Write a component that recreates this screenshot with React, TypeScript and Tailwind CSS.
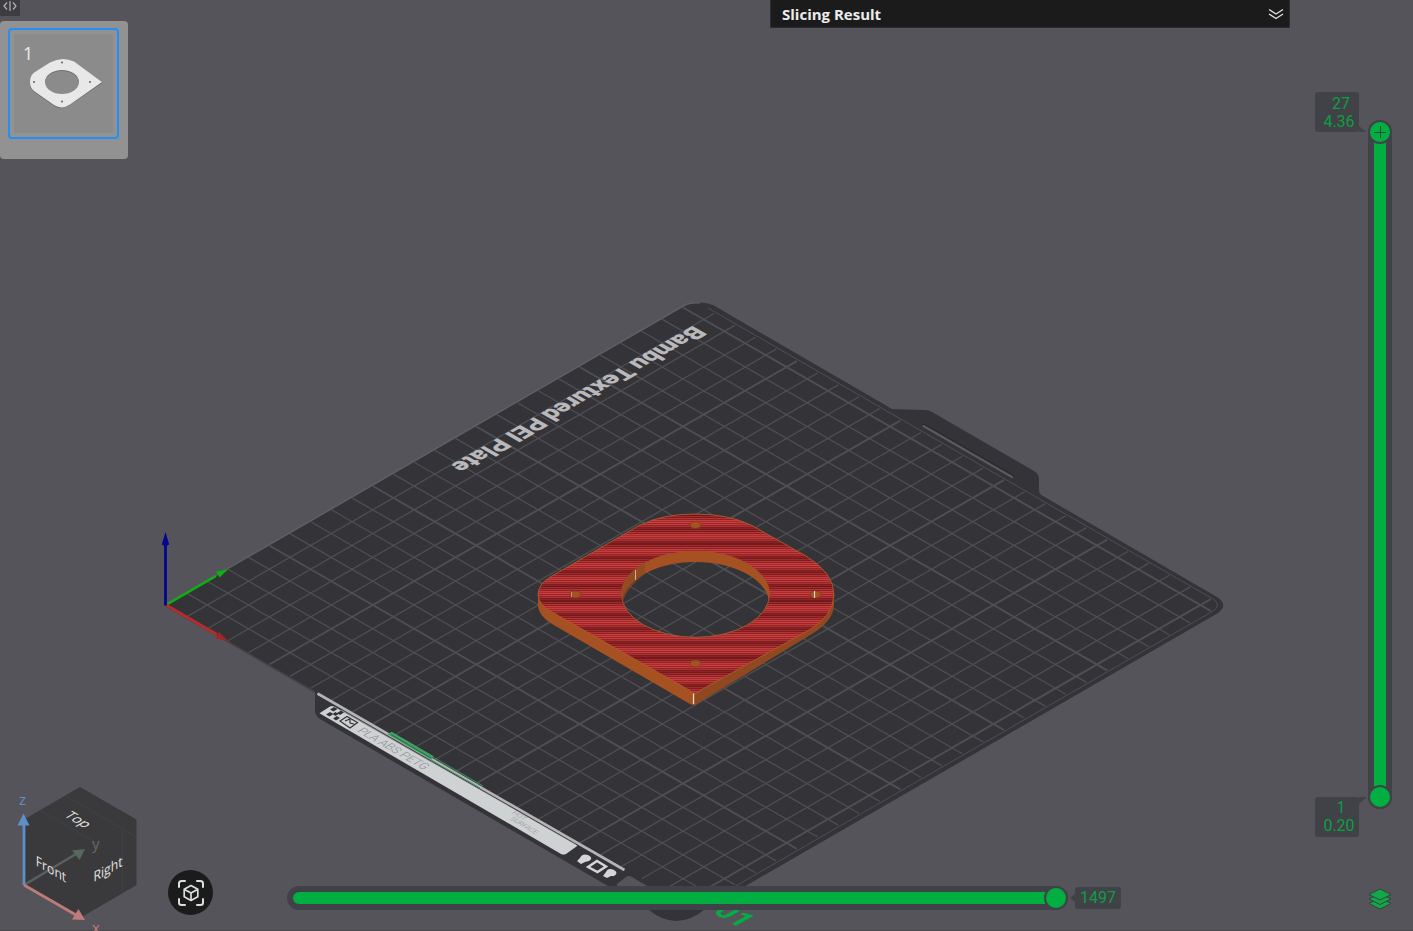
import { useState } from "react";

const CELL_X = 20.69;
const CELL_Y = 11.9;
const ORIGIN = { x: 165.8, y: 605 };
const GRID_END = 25.5;
const GRID_LINES = Array.from({ length: 25 }, (_, i) => i + 1);

const MAX_LAYER = 27;
const MAX_STEP = 1497;

// bed coordinates (1 unit = 10mm) -> scene coordinates
const project = (bx: number, by: number) => ({
  x: ORIGIN.x + CELL_X * (bx + by),
  y: ORIGIN.y + CELL_Y * (bx - by),
});

const layerZ = (layer: number) => (0.2 + (layer - 1) * 0.16).toFixed(2);

// one band of infill, darkest row first
const STRIPES = [
  "#6f1a1c", "#a02a2c", "#7c1e20", "#b43234", "#8c2426", "#c43c3c", "#a82c2e",
  "#c83e3e", "#9a282a", "#c23a3a", "#922628", "#ae2f31", "#7c1e20", "#8c2224",
];
const BAND = 14.25;
const INFILL_TOP = 513;
const INFILL_ROWS = Array.from({ length: 186 }, (_, i) => {
  const y = INFILL_TOP + i;
  const phase = (((y - 529) % BAND) + BAND) % BAND;
  return { y, fill: STRIPES[Math.floor(phase) % STRIPES.length] };
});

const TOP_FACE =
  "M538 595 Q538 584 551 576.5 L640 525 Q663 514 695 514 Q728 514 751 525 L806 556 Q834 573 834 595 Q833 616 810 629.5 L701 690 Q695 697 689 690 L551 611.5 Q539 605 538 595 Z M621.5 594.3 A74 43 0 1 0 769.5 594.3 A74 43 0 1 0 621.5 594.3 Z";

const HOLES = [
  { x: 695.5, y: 525 },
  { x: 575.5, y: 594.5 },
  { x: 815.5, y: 594.5 },
  { x: 695.5, y: 663.5 },
];

const THUMB =
  "appearance-none bg-transparent pointer-events-none outline-none [&::-webkit-slider-thumb]:pointer-events-auto [&::-webkit-slider-thumb]:size-6 [&::-webkit-slider-thumb]:cursor-pointer [&::-webkit-slider-thumb]:appearance-none [&::-webkit-slider-thumb]:rounded-full [&::-webkit-slider-thumb]:border-2 [&::-webkit-slider-thumb]:border-[#414247] [&::-webkit-slider-thumb]:bg-[#00ae42]";

function BedGrid() {
  return (
    <g stroke="#4e4e53">
      {GRID_LINES.map((n) => {
        const a = project(n, 0);
        const b = project(n, GRID_END);
        const c = project(0, n);
        const d = project(GRID_END, n);
        return (
          <g key={n} strokeWidth={n % 5 === 0 ? 2 : 1.3}>
            <line x1={a.x} y1={a.y} x2={b.x} y2={b.y} />
            <line x1={c.x} y1={c.y} x2={d.x} y2={d.y} />
          </g>
        );
      })}
    </g>
  );
}

function Bed() {
  return (
    <g>
      {/* plate body */}
      <path
        d="M166 605 L683 307 Q697 299 713 305 L892 409 L925 410 Q929 410 932 412 L1034 471 Q1039 474 1039 479 V490 Q1039 494 1043 496 L1217 597 Q1229 605 1218 613 L704 910 Q676 932 649 910 L608 886 L320 719 Q315 716 315 710 V692 Z"
        fill="#343338"
      />
      <path d="M166 604 L683 306 Q690 302 700 303" fill="none" stroke="#5e5d62" strokeWidth="1.5" />
      <BedGrid />
      <path d="M708 308 L1213 599 Q1222 605 1213 611 L708 902" fill="none" stroke="#4e4e53" />
      <path d="M166 606 L315 692" stroke="#434247" strokeWidth="1.5" />
      <path d="M923.5 425 L1012.5 476" stroke="#29282c" strokeWidth="3" strokeLinecap="round" />
      <path d="M923.5 426 L1012 477" stroke="#5a595e" strokeWidth="2.4" strokeLinecap="round" />
      <path d="M617 884 L626 877 Q629 875 632 877 L647 886 H617 Z" fill="#55545a" />

      <g transform="matrix(-2.069 1.19 -2.069 -1.19 165.8 605)">
        <text x="-245" y="-10" className="font-['Roboto'] text-[10px] font-black" fill="#b9b9bb">
          Bambu Textured PEI Plate
        </text>
      </g>

      {/* front lip */}
      <path d="M317.5 693.5 L624.5 870" stroke="#b5b5b6" strokeWidth="2.6" />
      <path d="M341 710 L576 845" stroke="#8c8c8f" />
      <path
        d="M319.5 713.3 L330 706.5 Q332 705.5 334 706.5 L577.5 845.7 L566 854 Q563.5 855 561 854 Z"
        fill="#cfd2d3"
      />
      <g fill="#343338">
        <path d="M330 709.5 l4 -2.500 l3.500 2 l-4 2.500z M337 713 l4 -2.500 l3 2 l-4 2.500z M326 714.500 l4 -2.500 l3.500 2 l-4 2.500z M333 718.500 l4 -2.500 l3 2 l-4 2.500z M332.500 714 l3 -2 l3 2 l-3 2z" />
      </g>
      <g fill="none" stroke="#343338" strokeWidth="1.2">
        <path d="M340 721 L347 716.5 L357.5 722.5 L350 728 Z" />
        <path d="M345 721 L350 719 V723 L354 724" />
      </g>
      <g transform="matrix(2.069 1.19 2.069 -1.19 165.8 605) scale(1 -1)" fill="#909295">
        <text x="99" y="7" className="font-['Roboto'] text-[5px] font-light">
          PLA ABS PETG
        </text>
        <text x="171" y="4" className="font-['Roboto'] text-[3px] font-light">
          HOT
        </text>
        <text x="173" y="7" className="font-['Roboto'] text-[3px] font-light">
          SURFACE
        </text>
      </g>
      <path d="M387.3 734.3 L391.7 731.7 L433.3 756 L431.7 760 Z" fill="#41a267" />
      <path d="M391 734.5 L431 758" stroke="#27593a" strokeWidth="0.8" />
      <path d="M433 757 L483 786 M432 760.5 L480 788" stroke="#3b9460" />
      <g fill="#d4d6d7">
        <path d="M577 861 L580 858 Q582 853 588 855 Q594 858 589 861 L585 862 L581 864 Z" />
        <path d="M603 876 L606 872 Q608 867 614 870 Q619 873 614 876 L611 876 L607 878 Z" />
      </g>
      <path d="M588 867 L597 861 L606 866.5 L597.5 872 Z" fill="none" stroke="#d4d6d7" strokeWidth="2.4" />

      <g transform="matrix(2.069 1.19 2.069 -1.19 165.8 605) scale(1 -1)">
        <text x="261" y="-3" className="font-['Roboto'] text-[12px] font-bold" fill="#00ae42">
          01
        </text>
      </g>
    </g>
  );
}

function OriginAxes() {
  return (
    <g>
      <path d="M166 605 L216 576" stroke="#0bb012" strokeWidth="2.6" />
      <path d="M228 569.5 L216 571.5 L219.5 577.5 Z" fill="#0bb012" />
      <path d="M166 605 L217 634.5" stroke="#bb2a2b" strokeWidth="2.6" />
      <path d="M228 641 L215.5 638.5 L219 632 Z" fill="#a52526" />
      <path d="M165.5 605.5 V544" stroke="#050590" strokeWidth="2.8" />
      <path d="M165.5 532 L169.2 544.5 Q165.5 547 161.8 544.5 Z" fill="#050590" />
    </g>
  );
}

function Model() {
  return (
    <g>
      <defs>
        <clipPath id="top-face">
          <path d={TOP_FACE} clipRule="evenodd" />
        </clipPath>
        <clipPath id="bore">
          <ellipse cx="695.5" cy="594.3" rx="74" ry="43" />
        </clipPath>
      </defs>
      {/* side walls */}
      <path d="M538 595 V606 Q539 616 552 624 L690 704 Q695 706 695 705 V690 L621 633 L600 600 Z" fill="#a55122" />
      <path d="M834 595 V606 Q833 621 812 634 L695 705 V690 L790 600 Z" fill="#8f4820" />
      {/* top surface */}
      <g clipPath="url(#top-face)" shapeRendering="crispEdges">
        {INFILL_ROWS.map((row) => (
          <rect key={row.y} x="536" y={row.y} width="300" height="1" fill={row.fill} />
        ))}
      </g>
      <path d={TOP_FACE} fill="none" stroke="#b05a2c" strokeWidth="0.9" />
      <g clipPath="url(#bore)">
        <path
          fillRule="evenodd"
          d="M600 540 H790 V650 H600 Z M621.5 605 A74 43 0 1 0 769.5 605 A74 43 0 1 0 621.5 605 Z"
          fill="#a55122"
        />
        <path d="M621 594 V606 L622 604 Q626 588 645 574 V560 H621 Z" fill="#8f4820" opacity="0.7" />
      </g>
      <path d="M635.5 570 V580" stroke="#c9b4ac" />
      <path d="M693.5 693.5 V704" stroke="#e6d9d2" strokeWidth="1.2" />
      {HOLES.map((h) => (
        <ellipse
          key={`${h.x}-${h.y}`}
          cx={h.x}
          cy={h.y}
          rx="5.5"
          ry="3.5"
          fill="#a55122"
          stroke="#7d3a1c"
          strokeWidth="0.8"
        />
      ))}
      <path d="M814.5 591 V598" stroke="#d8d8d8" strokeWidth="1.2" />
      <path d="M571.5 592 V597" stroke="#c9b4ac" strokeWidth="0.7" />
    </g>
  );
}

function Scene() {
  return (
    <svg
      className="absolute inset-0 h-full w-full"
      viewBox="0 0 1413 931"
      preserveAspectRatio="xMidYMid slice"
      aria-hidden="true"
    >
      <Bed />
      <OriginAxes />
      <Model />
    </svg>
  );
}

function PlateThumbnail() {
  return (
    <div className="w-32 rounded bg-[#929293] px-2 pt-[7px] pb-5">
      <button className="relative block size-[111px] rounded border-2 border-[#2490f5] p-1">
        <span className="absolute top-[11px] left-[13px] font-['Open_Sans'] text-lg leading-6 font-medium text-[#ececec]">
          1
        </span>
        <svg viewBox="14 34 99 99" className="block h-full w-full bg-[#8b8b8c]" aria-hidden="true">
          <path
            fillRule="evenodd"
            d="M30 83 Q30 76 35 73 L50 63 Q62 57 74 62 L101 81 Q103 82.5 101 84 L70 105 Q62 111 54 106 L34 92 Q30 89 30 83 Z M45 83 A17 12 0 1 0 79 83 A17 12 0 1 0 45 83 Z"
            fill="#6f6f70"
          />
          <path
            fillRule="evenodd"
            d="M30 82 Q30 75 35 72 L50 62.5 Q62 56 74 61.5 L102 82 L70 104.5 Q62 110 54 105 L34 91 Q30 88 30 82 Z M45 82 A17 12 0 1 0 79 82 A17 12 0 1 0 45 82 Z"
            fill="#e8e8e8"
          />
          <g fill="#555">
            <circle cx="62" cy="62.5" r="0.9" />
            <circle cx="34" cy="82" r="0.9" />
            <circle cx="90" cy="82" r="0.9" />
            <circle cx="62" cy="101.5" r="0.9" />
          </g>
        </svg>
      </button>
    </div>
  );
}

function ViewCube() {
  return (
    <svg viewBox="0 785 160 146" className="h-[146px] w-40 shrink-0 font-['Open_Sans']">
      <path d="M80 787 L136.5 819.5 V885 L80 918 L24 885 V819.5 Z" fill="#3a3a3c" />
      <path d="M122.5 828 V892 M68 797 L136 837 M40 810 L96 843" stroke="#424244" strokeWidth="0.8" fill="none" />
      <path d="M24 885 L76 854" stroke="#5b605f" strokeWidth="2.6" />
      <path d="M85 849 L72 850.5 L79.5 860 Z" fill="#57685f" />
      <g fill="#e2e2e2" textAnchor="middle">
        <text transform="matrix(0.87 0.5 -0.87 0.5 74 822)" className="text-[14px]">Top</text>
        <text transform="matrix(0.87 0.5 0 1 51 874)" className="text-[14px]">Front</text>
        <text transform="matrix(0.87 -0.5 0 1 108 874)" className="text-[14px]">Right</text>
      </g>
      <path d="M24 885 V824" stroke="#5f8fc9" strokeWidth="2.8" />
      <path d="M23.5 813.5 L29.5 825.5 H17.5 Z" fill="#5f8fc9" />
      <path d="M24 885 L76 915" stroke="#bd7b79" strokeWidth="2.8" />
      <path d="M85 920 L72 919.5 L78.5 909 Z" fill="#bd7b79" />
      <text x="19" y="805" className="text-[15px]" fill="#5f8fc9">z</text>
      <text x="92" y="849" className="text-[15px]" fill="#6a696e">y</text>
      <text x="92" y="933" className="text-[15px]" fill="#bd7b79">x</text>
    </svg>
  );
}

function FitViewButton() {
  return (
    <button
      aria-label="Fit view"
      className="mb-4 flex size-[45px] shrink-0 items-center justify-center rounded-full bg-[#1b1b1b]"
    >
      <svg
        viewBox="0 0 26 26"
        className="size-[26px]"
        fill="none"
        stroke="#dcdfe0"
        strokeWidth="2"
        strokeLinecap="round"
        strokeLinejoin="round"
      >
        <path d="M1 7 V3.5 Q1 1 3.5 1 H7 M19 1 H22.5 Q25 1 25 3.5 V7 M25 19 V22.5 Q25 25 22.5 25 H19 M7 25 H3.5 Q1 25 1 22.5 V19" />
        <path
          d="M13 5.5 L19.8 9.2 V16.8 L13 20.5 L6.2 16.8 V9.2 Z M6.5 9.5 L13 13 L19.5 9.5 M13 13 V20"
          strokeWidth="1.7"
        />
      </svg>
    </button>
  );
}

function MoveSlider() {
  const [step, setStep] = useState(MAX_STEP);
  return (
    <div className="mr-[169px] mb-[21px] ml-[74px] flex flex-1 items-center">
      <div className="relative h-6 flex-1 rounded-full bg-[#414247] py-1.5 pr-3 pl-1.5">
        <div className="h-full rounded-l-full bg-[#00ae42]" style={{ width: `${(step / MAX_STEP) * 100}%` }} />
        <input
          type="range"
          aria-label="Move"
          min={1}
          max={MAX_STEP}
          value={step}
          onChange={(e) => setStep(Number(e.target.value))}
          className={`absolute inset-0 h-6 w-full ${THUMB}`}
        />
      </div>
      <svg viewBox="0 0 7 8" className="h-2 w-[7px]" aria-hidden="true">
        <path d="M7 0 L2 4 L7 8 Z" fill="#414247" />
      </svg>
      <span className="w-[46px] rounded-[3px] bg-[#414247] text-center text-base leading-[22px] text-[#0c9f42]">
        {step}
      </span>
    </div>
  );
}

function LayerLabel({ layer, tail }: { layer: number; tail: "top" | "bottom" }) {
  return (
    <div
      className={`relative h-10 w-11 rounded-[3px] bg-[#414247] pl-1 text-center text-base leading-[18px] text-[#0c9f42] ${
        tail === "bottom" ? "pt-[3px]" : "pt-0.5"
      }`}
    >
      <div className="pl-1">{layer}</div>
      <div>{layerZ(layer)}</div>
      <svg
        viewBox="0 0 8 7"
        className={
          tail === "bottom" ? "absolute bottom-0 left-full h-[7px] w-2" : "absolute top-0 left-full h-[7px] w-2"
        }
        aria-hidden="true"
      >
        <path d={tail === "bottom" ? "M0 1 L7 7 H0 Z" : "M0 0 H8 L0 7 Z"} fill="#414247" />
      </svg>
    </div>
  );
}

function LayerSlider() {
  const [high, setHigh] = useState(MAX_LAYER);
  const [low, setLow] = useState(1);
  const pct = (n: number) => ((n - 1) / (MAX_LAYER - 1)) * 100;
  const vertical = `absolute inset-0 h-full w-6 [writing-mode:vertical-lr] [direction:rtl] ${THUMB}`;

  return (
    <div className="flex flex-1 pl-[25px]">
      <div className="flex flex-col justify-between">
        <LayerLabel layer={high} tail="bottom" />
        <LayerLabel layer={low} tail="top" />
      </div>
      <div className="relative my-7 ml-[9px] w-6 rounded-full bg-[#414247] px-1.5 py-3">
        <div className="relative h-full">
          <div
            className="absolute inset-x-0 bg-[#00ae42]"
            style={{ top: `${100 - pct(high)}%`, bottom: `${pct(low)}%` }}
          />
        </div>
        <input
          type="range"
          aria-label="Bottom layer"
          min={1}
          max={MAX_LAYER}
          value={low}
          onChange={(e) => setLow(Math.min(Number(e.target.value), high))}
          className={vertical}
        />
        <input
          type="range"
          aria-label="Top layer"
          min={1}
          max={MAX_LAYER}
          value={high}
          onChange={(e) => setHigh(Math.max(Number(e.target.value), low))}
          className={vertical}
        />
        <svg
          viewBox="0 0 12 12"
          className="pointer-events-none absolute left-1.5 mt-1.5 size-3"
          style={{ top: `${((100 - pct(high)) * 665) / 689}%` }}
          aria-hidden="true"
        >
          <path d="M0 6.5 H12 M6.5 0 V12" stroke="#2c4a37" />
        </svg>
      </div>
    </div>
  );
}

function LayersIcon() {
  return (
    <svg
      viewBox="0 0 24 22"
      className="block h-[22px] w-6"
      fill="#12a84a"
      stroke="#34433c"
      strokeWidth="1"
      strokeLinejoin="round"
    >
      <path d="M1 15.5 L12 10 L23 15.5 L12 21 Z" />
      <path d="M1 11 L12 5.5 L23 11 L12 16.5 Z" />
      <path d="M1 6.5 L12 1 L23 6.5 L12 12 Z" />
    </svg>
  );
}

export default function App() {
  return (
    <main className="relative flex min-h-screen overflow-hidden bg-[#55545a] font-['Roboto',sans-serif]">
      <Scene />
      <div className="absolute inset-x-0 bottom-0 h-px bg-[#48474c]" />

      <div className="relative flex min-w-0 flex-1 flex-col justify-between">
        <div className="flex items-start justify-between">
          <div>
            <button aria-label="Collapse plates" className="flex h-4 w-5 items-center justify-center bg-[#3d3c40] pb-1">
              <svg viewBox="0 0 14 12" className="h-3 w-3.5" fill="none" stroke="#b5b5b7" strokeWidth="1.2">
                <path d="M4 2.5 L1 6 L4 9.5 M7 1 V11 M10 2.5 L13 6 L10 9.5" />
              </svg>
            </button>
            <div className="pt-[5px]">
              <PlateThumbnail />
            </div>
          </div>

          <section className="flex h-7 w-[520px] items-center justify-between border border-t-0 border-[#2d2d30] bg-[#1b1b1b] pr-[5px] pl-[11px]">
            <h1 className="font-['Open_Sans'] text-[15px] leading-5 font-bold text-[#ececec]">Slicing Result</h1>
            <button aria-label="Expand slicing result">
              <svg viewBox="0 0 16 12" className="h-3 w-4" fill="none" stroke="#dcdcdc" strokeWidth="1.4">
                <path d="M1 1.5 L8 6 L15 1.5 M1 6 L8 10.5 L15 6" />
              </svg>
            </button>
          </section>
        </div>

        <div className="flex items-end">
          <ViewCube />
          <div className="w-2 shrink-0" />
          <FitViewButton />
          <MoveSlider />
        </div>
      </div>

      <aside className="relative flex w-[123px] shrink-0 flex-col pt-[92px]">
        <LayerSlider />
        <div className="flex h-[94px] items-end pb-[21px] pl-[78px]">
          <button aria-label="Layers">
            <LayersIcon />
          </button>
        </div>
      </aside>
    </main>
  );
}
